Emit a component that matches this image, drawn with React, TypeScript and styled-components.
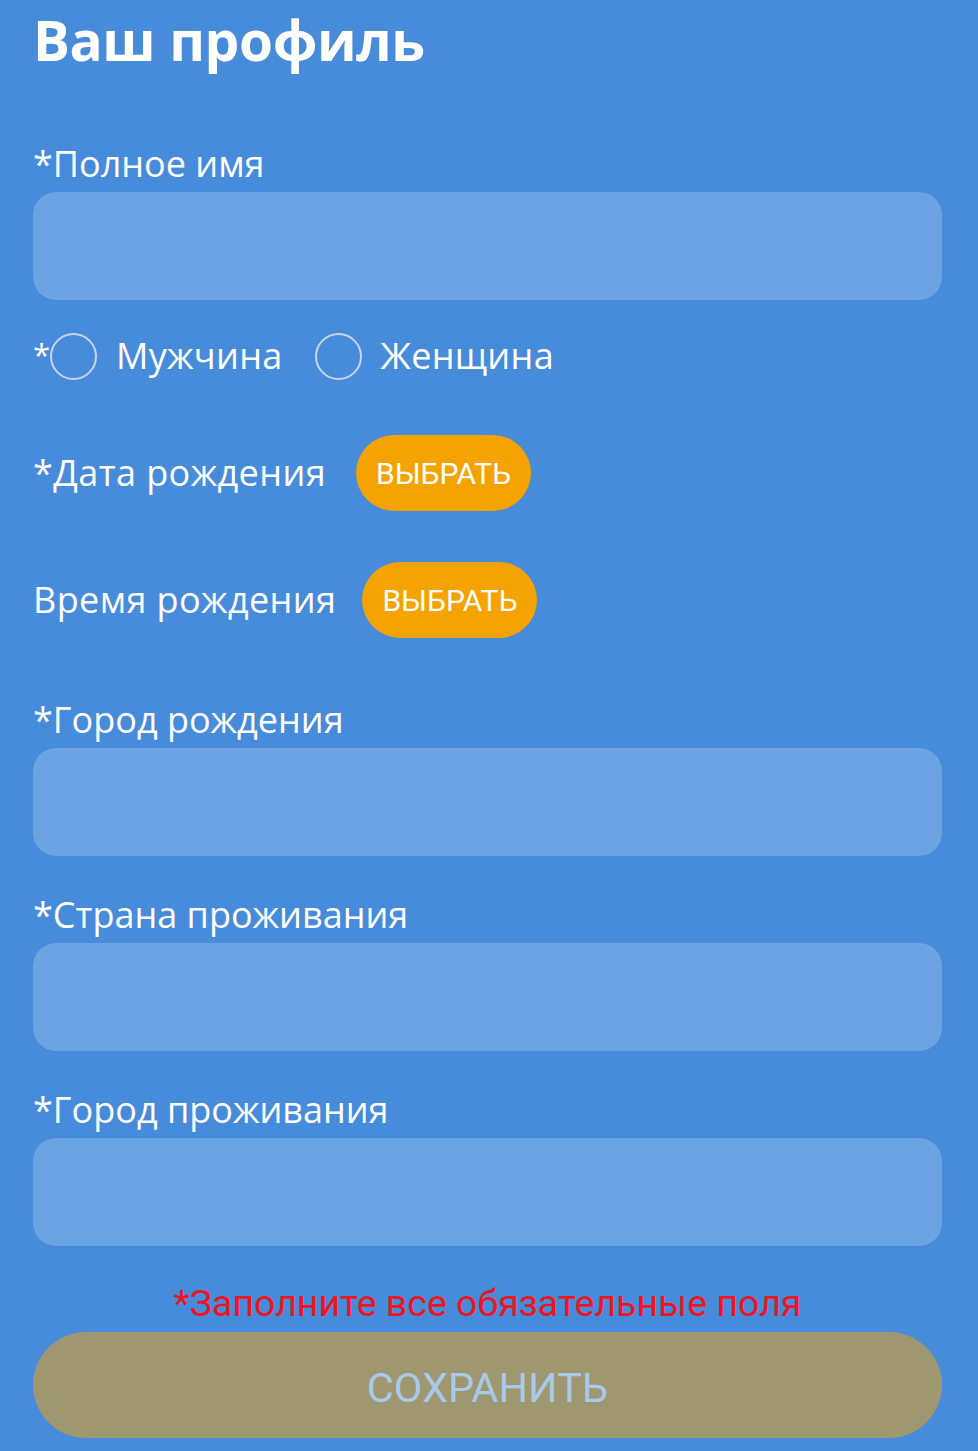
import React from 'react';
import styled, { createGlobalStyle } from 'styled-components';

const GlobalStyle = createGlobalStyle`
  html, body {
    margin: 0;
    padding: 0;
    background: #478bdb;
  }
  * {
    box-sizing: border-box;
  }
`;

// 전체 화면
const Page = styled.div`
  min-height: 1451px;
  background: #478bdb;
  padding: 0 36px 0 33px;
  display: flex;
  flex-direction: column;
  font-family: 'Open Sans', 'Noto Sans', sans-serif;
  color: #ffffff;
`;

const Title = styled.h1`
  margin: 0;
  font-size: 55px;
  line-height: 80px;
  font-weight: 700;
  letter-spacing: -0.4px;
`;

const Group = styled.div<{ $gap: number }>`
  display: flex;
  flex-direction: column;
  gap: 6px;
  margin-top: ${(p) => p.$gap}px;
`;

const Label = styled.label`
  font-size: 36px;
  line-height: 44px;
`;

const Field = styled.input`
  width: 100%;
  height: 108px;
  border: none;
  border-radius: 23px;
  background: #6ba3e3;
  outline: none;
  padding: 0 24px;
  font-size: 32px;
  color: #ffffff;
  font-family: inherit;
`;

const Row = styled.div<{ $gap: number }>`
  display: flex;
  align-items: center;
  margin-top: ${(p) => p.$gap}px;
`;

const RadioRow = styled(Row)`
  height: 56px;
`;

// 필수 표시 별표
const Star = styled.span`
  font-size: 31px;
  line-height: 44px;
  align-self: flex-start;
  margin-top: 4px;
`;

const Radio = styled.span`
  width: 47px;
  height: 47px;
  border-radius: 50%;
  border: 2px solid #c9d6ea;
  margin-right: 19px;
  flex-shrink: 0;
`;

const RadioText = styled.span`
  font-size: 36px;
  line-height: 44px;
  margin-right: 32px;
  letter-spacing: 0.3px;
`;

const InlineLabel = styled.span<{ $space: number }>`
  font-size: 36px;
  line-height: 44px;
  letter-spacing: 0.4px;
  margin-right: ${(p) => p.$space}px;
`;

const PickButton = styled.button`
  width: 175px;
  height: 76px;
  border: none;
  border-radius: 38px;
  background: #f5a300;
  color: #ffffff;
  font-family: Roboto, 'Liberation Sans', sans-serif;
  font-size: 30px;
  padding: 0;
  cursor: pointer;
`;

const ErrorText = styled.div`
  margin-top: 34px;
  text-align: center;
  font-family: Roboto, 'Liberation Sans', sans-serif;
  font-size: 37.5px;
  line-height: 46px;
  color: #f0141e;
`;

const SaveButton = styled.button`
  margin-top: 6px;
  width: 100%;
  height: 106px;
  border: none;
  border-radius: 53px;
  background: #9e976f;
  color: #a9c9e9;
  font-family: Roboto, 'Liberation Sans', sans-serif;
  font-size: 41.5px;
  padding-top: 6px;
  cursor: default;
`;

const fields = [
  { label: '*Город рождения', gap: 60 },
  { label: '*Страна проживания', gap: 37 },
  { label: '*Город проживания', gap: 37 },
];

export default function App() {
  return (
    <>
      <GlobalStyle />
      <Page>
        <Title>Ваш профиль</Title>

        <Group $gap={62}>
          <Label>*Полное имя</Label>
          <Field />
        </Group>

        <RadioRow $gap={28}>
          <Star>*</Star>
          <Radio />
          <RadioText>Мужчина</RadioText>
          <Radio />
          <RadioText>Женщина</RadioText>
        </RadioRow>

        <Row $gap={51}>
          <InlineLabel $space={30}>*Дата рождения</InlineLabel>
          <PickButton>ВЫБРАТЬ</PickButton>
        </Row>

        <Row $gap={51}>
          <InlineLabel $space={26}>Время рождения</InlineLabel>
          <PickButton>ВЫБРАТЬ</PickButton>
        </Row>

        {fields.map((f) => (
          <Group key={f.label} $gap={f.gap}>
            <Label>{f.label}</Label>
            <Field />
          </Group>
        ))}

        <ErrorText>*Заполните все обязательные поля</ErrorText>
        <SaveButton>СОХРАНИТЬ</SaveButton>
      </Page>
    </>
  );
}
